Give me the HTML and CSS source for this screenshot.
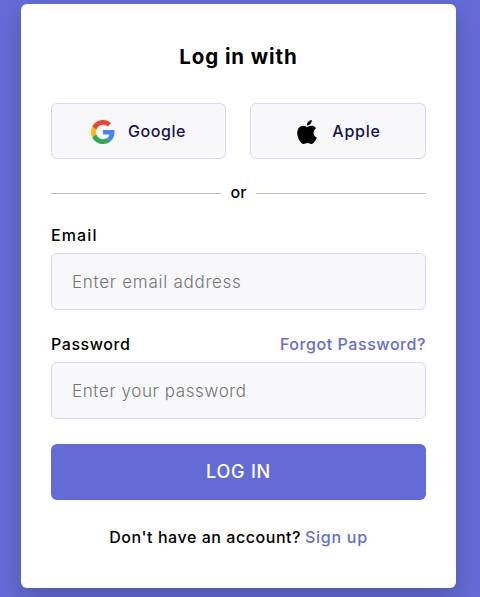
FILE: index.html
```html
<!DOCTYPE html>
<html lang="en">
<head>
<meta charset="utf-8">
<meta name="viewport" content="width=device-width, initial-scale=1">
<title>Log in</title>
<link rel="stylesheet" href="styles.css">
</head>
<body>
<main class="card">
  <h1 class="title">Log in with</h1>
  <div class="socials">
    <button class="social google" type="button">
      <svg class="logo" viewBox="0 0 48 48" aria-hidden="true">
        <path fill="#EA4335" d="M24 9.5c3.54 0 6.71 1.22 9.21 3.6l6.85-6.85C35.9 2.38 30.47 0 24 0 14.62 0 6.51 5.38 2.56 13.22l7.98 6.19C12.43 13.72 17.74 9.5 24 9.5z"/>
        <path fill="#4285F4" d="M46.98 24.55c0-1.57-.15-3.09-.38-4.55H24v9.02h12.94c-.58 2.96-2.26 5.48-4.78 7.18l7.73 6c4.51-4.18 7.09-10.36 7.09-17.65z"/>
        <path fill="#FBBC05" d="M10.53 28.59c-.48-1.45-.76-2.99-.76-4.59s.27-3.14.76-4.59l-7.98-6.19C.92 16.46 0 20.12 0 24c0 3.88.92 7.54 2.56 10.78l7.97-6.19z"/>
        <path fill="#34A853" d="M24 48c6.48 0 11.93-2.13 15.89-5.81l-7.73-6c-2.15 1.45-4.92 2.3-8.16 2.3-6.26 0-11.57-4.22-13.47-9.91l-7.98 6.19C6.51 42.62 14.62 48 24 48z"/>
      </svg>
      <span class="name">Google</span>
    </button>
    <button class="social apple" type="button">
      <svg class="logo" viewBox="0 0 24 24" aria-hidden="true">
        <path d="M12.152 6.896c-.948 0-2.415-1.078-3.96-1.04-2.04.027-3.91 1.183-4.961 3.014-2.117 3.675-.546 9.103 1.519 12.09 1.013 1.454 2.208 3.09 3.792 3.039 1.52-.065 2.09-.987 3.935-.987 1.831 0 2.35.987 3.96.948 1.637-.026 2.676-1.48 3.676-2.948 1.156-1.688 1.636-3.325 1.662-3.415-.039-.013-3.182-1.221-3.22-4.857-.026-3.04 2.48-4.494 2.597-4.559-1.429-2.09-3.623-2.324-4.39-2.376-2-.156-3.675 1.09-4.61 1.09zM15.53 3.83c.843-1.012 1.4-2.427 1.245-3.83-1.207.052-2.662.805-3.532 1.818-.78.896-1.454 2.338-1.273 3.714 1.338.104 2.715-.688 3.559-1.701"/>
      </svg>
      <span class="name">Apple</span>
    </button>
  </div>
  <div class="divider"><span class="name">or</span></div>
  <form class="form">
    <div class="labels"><label class="email-label" for="email">Email</label></div>
    <input class="field email" id="email" type="email" placeholder="Enter email address">
    <div class="labels"><label for="password">Password</label><a class="link forgot" href="#">Forgot Password?</a></div>
    <input class="field" id="password" type="password" placeholder="Enter your password">
    <button class="submit" type="button">LOG IN</button>
  </form>
  <p class="signup">Don't have an account? <a class="link join" href="#">Sign up</a></p>
</main>
</body>
</html>
```
FILE: styles.css
```css
* {
  box-sizing: border-box;
}

body {
  margin: 0;
  padding: 4px 24px 9px 21px;
  height: 597px;
  overflow: hidden;
  background: #636cd6;
  color: #000;
  font: 450 16px/18px Inter, "Liberation Sans", sans-serif;
  letter-spacing: .55px;
}

button,
input {
  font: inherit;
  letter-spacing: inherit;
}

.card {
  height: 584px;
  padding: 41px 30px 0;
  border-radius: 6px;
  background: #fff;
  box-shadow: 0 10px 25px rgba(0, 0, 0, .2);
}

.title {
  margin: 0 0 34px;
  font-size: 20.5px;
  line-height: 24px;
  font-weight: 700;
  letter-spacing: .9px;
  text-align: center;
}

.socials {
  display: grid;
  grid-template-columns: 175px 176px;
  justify-content: space-between;
  margin-bottom: 24px;
}

.social {
  display: flex;
  align-items: center;
  justify-content: center;
  height: 56px;
  padding: 1px 0 0;
  border: 1px solid #dad7f0;
  border-radius: 6px;
  background: #f8f8fb;
  color: #14134f;
}

.google {
  gap: 13px;
  letter-spacing: .6px;
}

.apple {
  gap: 13px;
  letter-spacing: .75px;
}

.name {
  margin-bottom: 2px;
}

.logo {
  width: 24px;
  height: 24px;
}

.apple .logo {
  fill: #000;
}

.divider {
  display: flex;
  align-items: center;
  gap: 10px;
  height: 20px;
  letter-spacing: 0;
}

.divider::before,
.divider::after {
  content: "";
  flex: 1;
  height: 1px;
  background: #bfbfbf;
}

.labels {
  display: flex;
  justify-content: space-between;
  height: 20px;
  margin: 23px 0 7px;
}

.email-label {
  letter-spacing: 1.1px;
}

.field {
  display: block;
  width: 100%;
  height: 57px;
  padding: 0 20px;
  border: 1px solid #dad7f0;
  border-radius: 6px;
  background: #f8f8fb;
  font-size: 17px;
  font-weight: 350;
  letter-spacing: .62px;
}

.email {
  letter-spacing: .74px;
}

.field::placeholder {
  color: #757575;
}

.field + .labels {
  margin-top: 25px;
}

.link {
  color: #636cd6;
  text-decoration: none;
}

.forgot {
  letter-spacing: .56px;
}

.submit {
  display: block;
  width: 100%;
  height: 56px;
  margin-top: 25px;
  padding: 0;
  border: 0;
  border-radius: 6px;
  background: #636cd6;
  color: #fff;
  font-size: 18px;
  font-weight: 500;
  letter-spacing: .8px;
}

.signup {
  margin: 28px 0 0;
  text-align: center;
  white-space: nowrap;
}

.join {
  margin-left: -1px;
  letter-spacing: .75px;
}
```
